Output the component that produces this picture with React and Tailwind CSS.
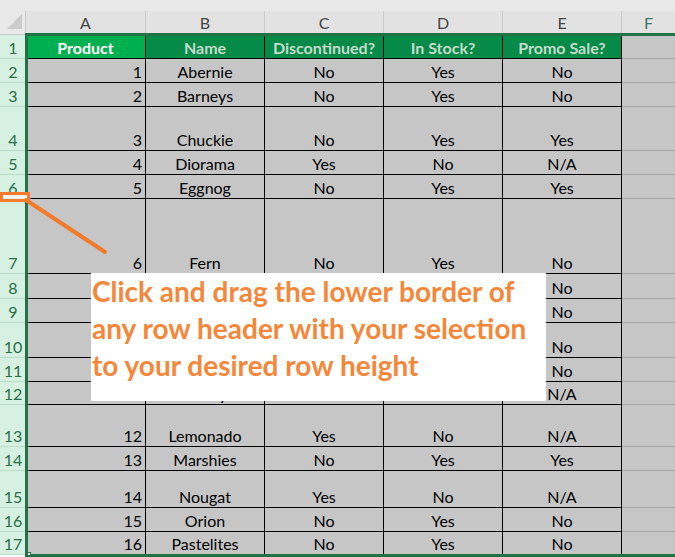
const cols = ["A", "B", "C", "D", "E"];

const rows = [
  { n: 1, h: "h-[24px]", head: true },
  { n: 2, h: "h-[24px]", d: ["1", "Abernie", "No", "Yes", "No"] },
  { n: 3, h: "h-[24px]", d: ["2", "Barneys", "No", "Yes", "No"] },
  { n: 4, h: "h-[44px]", d: ["3", "Chuckie", "No", "Yes", "Yes"] },
  { n: 5, h: "h-[24px]", d: ["4", "Diorama", "Yes", "No", "N/A"] },
  { n: 6, h: "h-[24px]", d: ["5", "Eggnog", "No", "Yes", "Yes"] },
  { n: 7, h: "h-[75px]", d: ["6", "Fern", "No", "Yes", "No"] },
  { n: 8, h: "h-[25px]", d: ["7", "Gumdrop", "Yes", "No", "No"] },
  { n: 9, h: "h-[24px]", d: ["8", "Hopsy", "No", "Yes", "No"] },
  { n: 10, h: "h-[35px]", d: ["9", "Icicle", "No", "Yes", "No"] },
  { n: 11, h: "h-[24px]", d: ["10", "Jellybean", "No", "Yes", "No"] },
  { n: 12, h: "h-[23px]", d: ["11", "Kandy", "Yes", "No", "N/A"] },
  { n: 13, h: "h-[42px]", d: ["12", "Lemonado", "Yes", "No", "N/A"] },
  { n: 14, h: "h-[24px]", d: ["13", "Marshies", "No", "Yes", "Yes"] },
  { n: 15, h: "h-[37px]", d: ["14", "Nougat", "Yes", "No", "N/A"] },
  { n: 16, h: "h-[24px]", d: ["15", "Orion", "No", "Yes", "No"] },
  { n: 17, h: "h-[23px]", d: ["16", "Pastelites", "No", "Yes", "No"] },
];

const headers = ["Product", "Name", "Discontinued?", "In Stock?", "Promo Sale?"];
const widths = ["w-[120px]", "w-[119px]", "w-[119px]", "w-[119px]", "w-[119px]"];

const Row = ({ row }) => {
  return (
    <div className={`flex ${row.h}`}>
      <div className="w-[26px] shrink-0 flex items-end justify-center pb-[1px] bg-[#d6f0e1] border-b border-[#b8dcc6] text-[#2a6e48] text-[16px] leading-[18px]">
        {row.n}
      </div>
      {cols.map((c, i) => {
        if (row.head) {
          return (
            <div
              key={c}
              className={`${widths[i]} shrink-0 flex items-end justify-center pb-[1px] border-r border-b border-black font-bold text-[16px] leading-[18px] ${
                i === 0 ? "bg-[#00b050] text-white" : "bg-[#058a47] text-[#c4dccb]"
              }`}
            >
              {headers[i]}
            </div>
          );
        }
        return (
          <div
            key={c}
            className={`${widths[i]} shrink-0 flex items-end pb-[1px] bg-[#c6c6c6] border-r border-b border-black text-[16px] leading-[18px] text-black ${
              i === 0 ? "justify-end pr-[3px]" : "justify-center"
            }`}
          >
            {row.d[i]}
          </div>
        );
      })}
      <div className="flex-1 border-b bg-[#c6c6c6] border-[#a6a6a6]" />
    </div>
  );
};

const App = () => {
  return (
    <div className="relative w-[675px] h-[557px] overflow-hidden bg-white font-['Lato','Liberation_Sans',sans-serif]">
      <div className="h-[11px] bg-[#e9e9e9]" />
      <div className="flex h-[24px] bg-[#e2e2e2] border-b border-[#c9c9c9]">
        <div className="w-[26px] shrink-0 relative bg-[#e9e9e9] border-r border-[#c9c9c9]">
          <div className="absolute left-[7px] top-[3px] w-0 h-0 border-l-[15px] border-l-transparent border-b-[15px] border-b-[#cbcbcb]" />
        </div>
        {cols.map((c, i) => (
          <div
            key={c}
            className={`${widths[i]} shrink-0 flex items-center justify-center border-r border-[#c9c9c9] text-[16px] text-[#444]`}
          >
            {c}
          </div>
        ))}
        <div className="flex-1 flex items-center justify-center text-[16px] text-[#3e7566]">F</div>
      </div>

      {rows.map((row) => (
        <Row key={row.n} row={row} />
      ))}
      <div className="h-[24px] bg-white" />

      {/* selection outline */}
      <div className="absolute left-[25px] top-[33px] w-[700px] h-[524px] border-[3px] border-[#217346] pointer-events-none" />
      <div className="absolute left-[27px] top-[552px] w-[4px] h-[4px] bg-white border border-[#217346]" />

      {/* drag marker */}
      <svg className="absolute inset-0 pointer-events-none" width="675" height="557">
        <rect x="1.5" y="193.5" width="27" height="7" fill="#e8efe9" stroke="#f37b2b" strokeWidth="3" />
        <line x1="3" y1="197" x2="27" y2="197" stroke="#ffffff" strokeWidth="1" />
        <line x1="26" y1="200" x2="105" y2="252" stroke="#f37b2b" strokeWidth="4" strokeLinecap="round" />
      </svg>

      <div className="absolute left-[91px] top-[273px] w-[455px] h-[128px] bg-white px-[1px] text-[28px] leading-[37px] font-bold text-[#f5873a] whitespace-nowrap">
        Click and drag the lower border of
        <br />
        any row header with your selection
        <br />
        to your desired row height
      </div>
    </div>
  );
};

export default App;
